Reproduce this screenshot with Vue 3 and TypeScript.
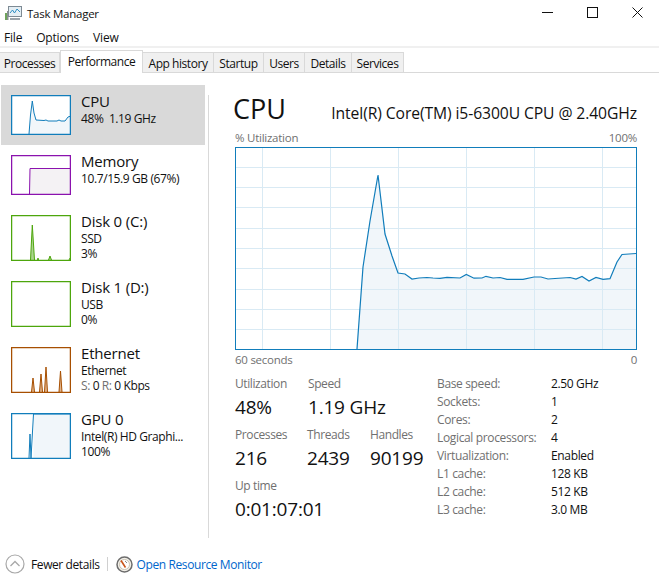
<script setup lang="ts">
interface Device {
  name: string
  lines: string[]
  color: string
  tint: string
  height: number
  fill: string
  line: string
  selected?: boolean
}

const devices: Device[] = [
  {
    name: 'CPU', lines: ['48%  1.19 GHz'], color: '#117dbb', tint: '#f1f6fa', height: 40, selected: true,
    fill: 'M18 39L19.5 20L21.3 6L23 18L25 25L33 25.5L35 25L37 26L46 26L48 25L50 26L54 26L57 22L60 21V39Z',
    line: 'M18 39L19.5 20L21.3 6L23 18L25 25L33 25.5L35 25L37 26L46 26L48 25L50 26L54 26L57 22L60 21'
  },
  {
    name: 'Memory', lines: ['10.7/15.9 GB (67%)'], color: '#8b12ae', tint: '#f4f2f4', height: 40,
    fill: 'M18.5 39L19 13.5H60V39Z',
    line: 'M18.5 39L19 13.5H60'
  },
  {
    name: 'Disk 0 (C:)', lines: ['SSD', '3%'], color: '#4da60c', tint: '#a9d48d', height: 46,
    fill: 'M19.500 45L21.300 10L23.500 45ZM37.500 45L39 41L40.500 45Z',
    line: 'M19.500 45L21.300 10L23.500 45M26.500 45L27 43L27.500 45M37.500 45L39 41L40.500 45M58 45L59 43'
  },
  {
    name: 'Disk 1 (D:)', lines: ['USB', '0%'], color: '#4da60c', tint: '#fff', height: 46,
    fill: '', line: ''
  },
  {
    name: 'Ethernet', lines: ['Ethernet'], color: '#a74f01', tint: '#e0b48c', height: 46,
    fill: 'M20.500 45L22 31L23.500 45ZM28.500 45L30 27L31.500 45ZM33.500 45L35 20L36.500 45ZM48 45L49.500 24L51 45Z',
    line: 'M20.500 45L22 31L23.500 45M28.500 45L30 27L31.500 45M33.500 45L35 20L36.500 45M48 45L49.500 24L51 45'
  },
  {
    name: 'GPU 0', lines: ['Intel(R) HD Graphi...', '100%'], color: '#117dbb', tint: '#f1f6fa', height: 46,
    fill: 'M22.500 45V1H60V45Z',
    line: 'M18 45L19 21L20 45L22.500 1H60'
  }
]

const gridX = [27, 95, 163, 231, 299, 367]
const gridY = [20, 40, 60, 81, 101, 121, 142, 162, 182]

const cpuPoints: [number, number][] = [
  [357, 350], [363, 268], [370, 222], [378, 176], [385, 235], [392, 257], [398, 274], [405, 275],
  [412, 280], [419, 279], [427, 278.5], [433, 279], [440, 279.3], [447, 278.3], [460, 279],
  [466.3, 275.5], [474, 279.2], [482, 279], [486, 277.3], [493, 279], [500, 278.5], [507, 280.3],
  [523, 280.3], [534, 278], [541, 278], [548, 280], [555, 279.5], [570, 278.5], [576, 280],
  [582, 277.5], [589, 282], [596, 278.5], [603, 280.3], [610, 279.7], [617, 263], [622, 255.5],
  [636, 254.5]
]
const cpuLine = cpuPoints.map(([x, y]) => `${x - 235},${y - 148}`).join(' ')
const cpuArea = `${cpuLine} 401,202`

const specs: [string, string][] = [
  ['Base speed:', '2.50 GHz'],
  ['Sockets:', '1'],
  ['Cores:', '2'],
  ['Logical processors:', '4'],
  ['Virtualization:', 'Enabled'],
  ['L1 cache:', '128 KB'],
  ['L2 cache:', '512 KB'],
  ['L3 cache:', '3.0 MB']
]

const tabs = ['Processes', 'Performance', 'App history', 'Startup', 'Users', 'Details', 'Services']
const menus = ['File', 'Options', 'View']
</script>

<template>
  <div class="window">
    <header class="titlebar">
      <svg class="app-icon" width="17" height="16" viewBox="0 0 17 16">
        <rect x="3.500" y="0.500" width="13" height="10" fill="#e4eef4" stroke="#7d8a94" />
        <path d="M5 7L7.500 4L9.500 7L12 3L15 6" fill="none" stroke="#2f8fc4" />
        <rect x="0" y="7" width="2" height="7" fill="#6fa45c" />
        <rect x="2" y="5" width="1.500" height="9" fill="#8a8f93" />
        <path d="M5 12H15V14H5Z" fill="#9aa3aa" />
      </svg>
      <span class="title">Task Manager</span>
      <div class="controls">
        <svg width="11" height="11" viewBox="0 0 11 11"><path d="M0 5.500H11" stroke="#111" /></svg>
        <svg width="11" height="11" viewBox="0 0 11 11"><rect x="0.500" y="0.500" width="10" height="10" fill="none" stroke="#111" /></svg>
        <svg width="11" height="11" viewBox="0 0 11 11"><path d="M0.500 0.500L10.500 10.500M10.500 0.500L0.500 10.500" stroke="#111" /></svg>
      </div>
    </header>

    <nav class="menu">
      <span v-for="m in menus" :key="m">{{ m }}</span>
    </nav>

    <div class="tabs">
      <span v-for="t in tabs" :key="t" class="tab" :class="{ active: t === 'Performance' }">{{ t }}</span>
    </div>

    <div class="body">
      <aside class="sidebar">
        <div v-for="d in devices" :key="d.name" class="device" :class="{ selected: d.selected }">
          <svg class="mini" width="60" :height="d.height" :viewBox="`0 0 60 ${d.height}`">
            <rect x="0" y="0" width="60" :height="d.height" fill="#fff" />
            <path v-if="d.fill" :d="d.fill" :fill="d.tint" />
            <path v-if="d.line" :d="d.line" fill="none" :stroke="d.color" stroke-width="1" />
            <rect x="0.500" y="0.500" width="59" :height="d.height - 1" fill="none" :stroke="d.color" stroke-width="1.500" />
          </svg>
          <div class="device-text">
            <div class="device-name">{{ d.name }}</div>
            <div v-for="l in d.lines" :key="l" class="device-line">{{ l }}</div>
            <div v-if="d.name === 'Ethernet'" class="device-line"><span class="dim">S:</span> 0 <span class="dim">R:</span> 0 Kbps</div>
          </div>
        </div>
      </aside>

      <main class="main">
        <div class="head">
          <span class="big">CPU</span>
          <span class="model">Intel(R) Core(TM) i5-6300U CPU @ 2.40GHz</span>
        </div>
        <div class="axis top"><span>% Utilization</span><span>100%</span></div>
        <svg class="chart" width="402" height="203" viewBox="0 0 402 203">
          <polygon :points="cpuArea" fill="#f1f6fa" />
          <line v-for="x in gridX" :key="x" :x1="x + 0.500" y1="0" :x2="x + 0.500" y2="203" stroke="#d9eaf4" />
          <line v-for="y in gridY" :key="y" x1="0" :y1="y + 0.500" x2="402" :y2="y + 0.500" stroke="#d9eaf4" />
          <polyline :points="cpuLine" fill="none" stroke="#117dbb" stroke-width="1.200" />
          <rect x="0.500" y="0.500" width="401" height="202" fill="none" stroke="#117dbb" />
        </svg>
        <div class="axis bottom"><span>60 seconds</span><span>0</span></div>

        <div class="details">
          <div class="stats">
            <div class="stat-row">
              <div class="stat w-util"><label>Utilization</label><b>48%</b></div>
              <div class="stat"><label>Speed</label><b>1.19 GHz</b></div>
            </div>
            <div class="stat-row">
              <div class="stat w-proc"><label>Processes</label><b>216</b></div>
              <div class="stat w-thr"><label>Threads</label><b>2439</b></div>
              <div class="stat"><label>Handles</label><b>90199</b></div>
            </div>
            <div class="stat-row">
              <div class="stat"><label>Up time</label><b>0:01:07:01</b></div>
            </div>
          </div>
          <dl class="specs">
            <div v-for="[k, v] in specs" :key="k" class="spec">
              <dt>{{ k }}</dt>
              <dd>{{ v }}</dd>
            </div>
          </dl>
        </div>
      </main>
    </div>

    <footer class="footer">
      <svg width="20" height="20" viewBox="0 0 20 20">
        <circle cx="10" cy="10" r="9" fill="#fff" stroke="#a8a8a8" stroke-width="1.200" />
        <path d="M5.500 12L10 7.500L14.500 12" fill="none" stroke="#a8a8a8" stroke-width="1.300" />
      </svg>
      <span class="fewer">Fewer details</span>
      <span class="divider"></span>
      <svg width="17" height="17" viewBox="0 0 17 17">
        <circle cx="8.500" cy="8.500" r="7.500" fill="#f2efe8" stroke="#6d6d6d" stroke-width="1.500" />
        <circle cx="8.500" cy="8.500" r="5" fill="#fff" stroke="#c9c2b2" />
        <path d="M5 4.500L9.500 11.500" stroke="#c9541a" stroke-width="1.600" />
        <path d="M9 5L11 7" stroke="#8a8a8a" />
      </svg>
      <a class="link">Open Resource Monitor</a>
    </footer>
  </div>
</template>

<style scoped>
.window {
  width: 659px;
  height: 586px;
  display: flex;
  flex-direction: column;
  background: #fff;
  color: #111;
  font-family: "Open Sans", "Noto Sans", sans-serif;
  font-size: 12px;
  overflow: hidden;
}
.titlebar {
  height: 28px;
  display: flex;
  align-items: center;
  padding-left: 5px;
  flex: none;
}
.app-icon { margin-right: 5px; }
.title { font-size: 11.5px; letter-spacing: -0.25px; margin-top: -2px; }
.controls {
  margin-left: auto;
  display: flex;
  gap: 34px;
  margin-right: 16px;
  margin-top: -4px;
}
.menu {
  height: 18px;
  flex: none;
  display: flex;
  align-items: center;
  gap: 14px;
  padding-left: 4px;
  letter-spacing: -0.2px;
  border-bottom: 2px solid #f0f0f0;
}
.tabs {
  flex: none;
  height: 25px;
  display: flex;
  align-items: flex-end;
  border-bottom: 1px solid #d9d9d9;
  box-sizing: border-box;
  padding-top: 2px;
}
.tab {
  height: 20px;
  box-sizing: border-box;
  text-align: center;
  line-height: 21px;
  background: #f0f0f0;
  border: 1px solid #d9d9d9;
  border-bottom: none;
  border-left: none;
  letter-spacing: -0.45px;
  white-space: nowrap;
}
.tab:nth-child(1) { width: 60px; }
.tab:nth-child(2) { width: 83px; }
.tab:nth-child(3) { width: 71px; }
.tab:nth-child(4) { width: 50px; }
.tab:nth-child(5) { width: 41px; }
.tab:nth-child(6) { width: 47px; }
.tab:nth-child(7) { width: 52px; }
.tab.active {
  height: 23px;
  margin-bottom: -1px;
  background: #fff;
  border-left: 1px solid #d9d9d9;
  line-height: 22px;
}
.body {
  flex: 1;
  display: flex;
  min-height: 0;
}
.sidebar {
  width: 209px;
  flex: none;
  box-sizing: border-box;
  padding: 12px 0 0 1px;
  position: relative;
}
.sidebar::after {
  content: "";
  position: absolute;
  right: 0;
  top: 22px;
  bottom: 6px;
  width: 1px;
  background: #d9d9d9;
}
.device {
  width: 204px;
  display: flex;
  box-sizing: border-box;
  padding: 10px 0 10px 10px;
}
.device.selected { background: #d9d9d9; }
.mini { flex: none; }
.device-text { margin-left: 10px; margin-top: -3px; height: 37px; }
.device-name { font-size: 15px; line-height: 19px; letter-spacing: -0.2px; }
.device-line { font-size: 12px; line-height: 15px; letter-spacing: -0.4px; white-space: pre; }
.dim { color: #707070; }
.main {
  flex: 1;
  padding: 0 22px 0 26px;
  min-width: 0;
}
.head {
  height: 39px;
  margin-top: 16px;
  display: flex;
  justify-content: space-between;
  align-items: flex-end;
  margin-left: -2px;
}
.big { font-size: 27px; line-height: 38px; }
.model { font-size: 15.7px; line-height: 30px; letter-spacing: -0.1px; }
.axis {
  display: flex;
  justify-content: space-between;
  color: #707070;
  font-size: 11.5px;
  letter-spacing: -0.25px;
  width: 402px;
}
.chart { display: block; }
.axis.top { height: 19px; line-height: 19px; }
.axis.bottom { height: 17px; line-height: 20px; }
.details {
  display: flex;
  margin-top: 9px;
}
.stats { width: 202px; flex: none; }
.stat-row {
  display: flex;
  height: 51px;
}
.stat label {
  display: block;
  color: #707070;
  font-size: 12px;
  line-height: 16px;
  letter-spacing: -0.4px;
}
.stat b {
  display: block;
  font-weight: 400;
  font-size: 19px;
  line-height: 30px;
  letter-spacing: -0.2px;
  white-space: nowrap;
}
.w-util { width: 73px; }
.w-proc { width: 72px; }
.w-thr { width: 63px; }
.specs { margin: 0; }
.spec {
  display: flex;
  height: 18px;
  line-height: 16px;
  letter-spacing: -0.35px;
}
.spec dt { width: 114px; color: #707070; white-space: nowrap; }
.spec dd { margin: 0; }
.footer {
  height: 42px;
  flex: none;
  display: flex;
  align-items: center;
  padding-left: 5px;
  box-sizing: border-box;
  padding-bottom: 2px;
  letter-spacing: -0.4px;
}
.fewer { margin-left: 6px; }
.divider {
  width: 1px;
  height: 14px;
  background: #d0d0d0;
  margin: 0 8px 0 7px;
}
.link { color: #0066cc; margin-left: 4px; }
</style>

<style>
html, body { background: #fff; }
</style>
